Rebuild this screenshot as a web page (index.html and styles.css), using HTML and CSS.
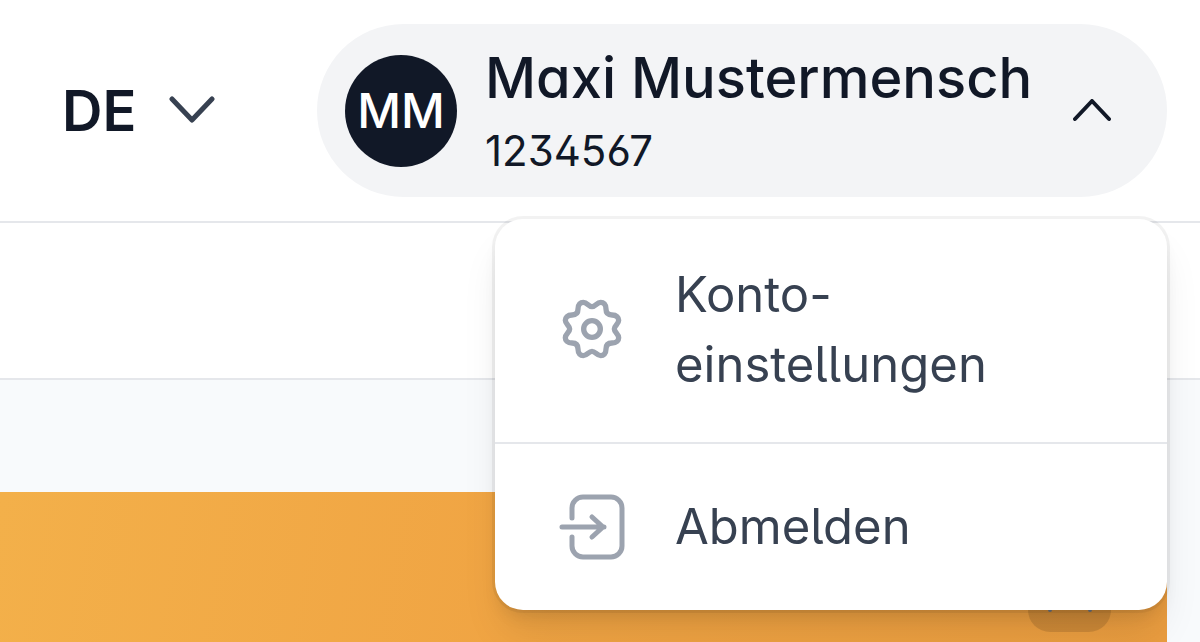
FILE: index.html
```
<!DOCTYPE html>
<html lang="de">
<head>
  <meta charset="UTF-8">
  <meta name="viewport" content="width=device-width, initial-scale=1.0">
  <title>Konto</title>
  <link rel="stylesheet" href="styles.css">
</head>
<body>

  <header class="header">
    <button class="language" type="button">
      DE
      <svg class="language-arrow" viewBox="0 0 46 30" aria-hidden="true">
        <path d="M3 3l20 21L43 3"/>
      </svg>
    </button>

    <div class="account">
      <button class="account-button" type="button" aria-expanded="true">
        <span class="avatar">MM</span>
        <span class="account-text">
          <span class="account-name">Maxi Mustermensch</span>
          <span class="account-number">1234567</span>
        </span>
        <svg class="account-arrow" viewBox="0 0 38 24" aria-hidden="true">
          <path d="M2 20L19 2l17 18"/>
        </svg>
      </button>

      <nav class="menu">
        <a class="menu-item" href="#konto">
          <svg class="menu-icon" viewBox="-99 -99 204 204" aria-hidden="true">
            <g stroke-width="16">
              <path d="M-42 -60C-42 -74 -34 -80 -26 -80C-14 -80 -10 -67 0 -67C10 -67 14 -80 26 -80C34 -80 42 -74 42 -60Q42 -42 60 -42C74 -42 80 -34 80 -26C80 -14 67 -10 67 0C67 10 80 14 80 26C80 34 74 42 60 42Q42 42 42 60C42 74 34 80 26 80C14 80 10 67 0 67C-10 67 -14 80 -26 80C-34 80 -42 74 -42 60Q-42 42 -60 42C-74 42 -80 34 -80 26C-80 14 -67 10 -67 0C-67 -10 -80 -14 -80 -26C-80 -34 -74 -42 -60 -42Q-42 -42 -42 -60Z"/>
              <circle r="25"/>
            </g>
          </svg>
          <span>Konto-<br>einstellungen</span>
        </a>
        <a class="menu-item" href="#abmelden">
          <svg class="menu-icon" viewBox="0 0 68 68" aria-hidden="true">
            <g stroke-width="5">
              <path d="M13 25V15A11 11 0 0 1 24 4H52a11 11 0 0 1 11 11v38a11 11 0 0 1-11 11H24a11 11 0 0 1-11-11V44"/>
              <path d="M3 34h42M33 24l11 10-11 10"/>
            </g>
          </svg>
          <span>Abmelden</span>
        </a>
      </nav>
    </div>
  </header>

  <div class="subheader"></div>

  <main class="content">
    <section class="banner">
      <div class="banner-badge">
        <svg viewBox="0 0 46 66" aria-hidden="true">
          <path d="M3 20v42M43 20v42"/>
        </svg>
      </div>
    </section>
  </main>

</body>
</html>
```
FILE: styles.css
```
* {
  box-sizing: border-box;
}
body {
  margin: 0;
  min-height: 100vh;
  display: flex;
  flex-direction: column;
  background: #f8fafc;
  color: #111827;
  font-family: Inter, sans-serif;
  font-feature-settings: "ss01", "cv05", "cv09", "cv11";
}
button {
  border: none;
  padding: 0;
  background: none;
  color: inherit;
  font: inherit;
  font-feature-settings: inherit;
  cursor: pointer;
}
svg {
  flex: none;
  fill: none;
  stroke: currentColor;
  stroke-linecap: round;
  stroke-linejoin: round;
}

.header {
  display: flex;
  align-items: center;
  justify-content: space-between;
  padding: 24px 33px 24px 62px;
  background: #fff;
  border-bottom: 2px solid #e5e7eb;
}
.language {
  display: flex;
  align-items: center;
  gap: 33px;
  font-size: 56px;
  line-height: 64px;
  font-weight: 600;
}
.language-arrow {
  width: 46px;
  height: 30px;
  color: #374151;
  stroke-width: 5;
}

.account {
  position: relative;
}
.account-button {
  display: flex;
  align-items: center;
  width: 850px;
  height: 173px;
  padding: 0 56px 0 28px;
  border-radius: 87px;
  background: #f3f4f6;
  text-align: left;
}
.avatar {
  display: flex;
  align-items: center;
  justify-content: center;
  flex: none;
  width: 112px;
  height: 112px;
  margin-right: 28px;
  border-radius: 50%;
  background: #111827;
  color: #fff;
  font-size: 48px;
  font-weight: 500;
}
.account-text {
  flex: 1;
  display: flex;
  flex-direction: column;
  padding-top: 6px;
}
.account-name {
  font-size: 56px;
  line-height: 74px;
  font-weight: 500;
  white-space: nowrap;
}
.account-number {
  font-size: 42px;
  line-height: 72px;
}
.account-arrow {
  width: 38px;
  height: 24px;
  stroke-width: 4;
}

.menu {
  position: absolute;
  z-index: 1;
  top: calc(100% + 22px);
  right: 0;
  width: 672px;
  border-radius: 28px;
  background: #fff;
  box-shadow: 0 0 0 3px rgba(0, 0, 0, 0.05), 0 28px 42px -8px rgba(0, 0, 0, 0.1), 0 11px 17px -6px rgba(0, 0, 0, 0.1);
}
.menu-item {
  display: flex;
  align-items: center;
  gap: 48px;
  padding: 41px 64px 42px;
  color: #374151;
  font-size: 49px;
  line-height: 70px;
  text-decoration: none;
}
.menu-item + .menu-item {
  padding: 48px 64px;
  border-top: 2px solid #e5e7eb;
}
.menu-icon {
  width: 68px;
  height: 68px;
  color: #9ca3af;
}

.subheader {
  height: 157px;
  background: #fff;
  border-bottom: 2px solid #e5e7eb;
}

.content {
  flex: 1;
  display: flex;
  padding: 112px 33px 0 0;
}
.banner {
  flex: 1;
  display: flex;
  align-items: flex-start;
  justify-content: flex-end;
  padding: 56px 56px 10px;
  background: linear-gradient(100deg, #f3b04a, #f0a443 45%, #e99c3f);
}
.banner-badge {
  display: flex;
  justify-content: center;
  width: 83px;
  height: 84px;
  border-radius: 22px;
  background: rgba(0, 0, 0, 0.12);
  color: #6b7280;
}
.banner-badge svg {
  width: 46px;
  height: 66px;
  stroke-width: 4;
}
```
